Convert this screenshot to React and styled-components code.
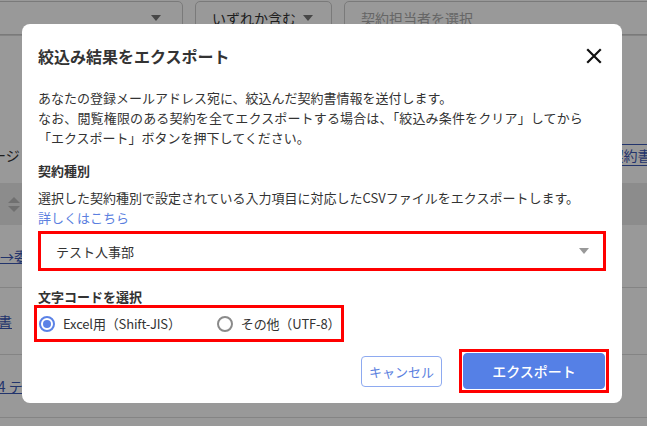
import styled, { createGlobalStyle } from 'styled-components';

const GlobalStyle = createGlobalStyle`
  html, body {
    margin: 0;
    padding: 0;
    width: 647px;
    height: 426px;
    overflow: hidden;
    background: #fff;
    font-family: "Noto Sans CJK JP", "Noto Sans", sans-serif;
    color: #333;
  }
`;

/* ---------- page behind the dialog ---------- */

const Page = styled.div`
  width: 647px;
  height: 426px;
  overflow: hidden;
  background: #fff;
`;

const FilterBar = styled.div`
  display: flex;
  gap: 12px;
  padding-top: 1px;
  margin-left: -20px;
  border-bottom: 1px solid #ddd;
`;

const FilterBox = styled.div`
  flex: 0 0 ${p => p.$w}px;
  height: 34px;
  box-sizing: border-box;
  border: 1px solid #ccc;
  border-radius: 5px;
  display: flex;
  align-items: center;
  justify-content: space-between;
  padding: 0 ${p => p.$pr || 18}px 0 16px;
  font-size: 14px;
  color: ${p => (p.$placeholder ? '#aaa' : '#333')};
`;

const Caret = styled.span`
  width: 0;
  height: 0;
  border-left: 5px solid transparent;
  border-right: 5px solid transparent;
  border-top: 6px solid ${p => p.$color || '#777'};
`;

const ToolRow = styled.div`
  display: flex;
  justify-content: space-between;
  align-items: center;
  height: 40px;
  margin-top: 99px;
  margin-left: -50px;
  margin-right: -21px;
  font-size: 14px;
`;

const OutlineBtn = styled.div`
  border: 1px solid #3a57b5;
  border-radius: 3px;
  padding: 0 10px;
  height: 20px;
  line-height: 20px;
  color: #3a57b5;
  font-size: 14px;
`;

const TableHead = styled.div`
  height: 42px;
  margin-top: 8px;
  background: #eaeaea;
  display: flex;
  align-items: center;
  padding-left: 8px;
`;

const SortIcon = styled.div`
  display: flex;
  flex-direction: column;
  gap: 3px;
  &:before, &:after {
    content: '';
    width: 0;
    height: 0;
    border-left: 6px solid transparent;
    border-right: 6px solid transparent;
  }
  &:before { border-bottom: 6px solid #bbb; }
  &:after { border-top: 6px solid #bbb; }
`;

const TableRow = styled.div`
  height: ${p => p.$h}px;
  box-sizing: border-box;
  border-bottom: 1px solid #ddd;
  display: flex;
  align-items: center;
  margin-left: ${p => p.$shift}px;
`;

const RowLink = styled.a`
  font-size: 14px;
  color: #3a57b5;
  text-decoration: underline;
  white-space: nowrap;
`;

/* ---------- dialog ---------- */

const Overlay = styled.div`
  position: fixed;
  inset: 0;
  background: rgba(0, 0, 0, 0.4);
  display: flex;
  align-items: flex-start;
  padding: 24px 0 0 22px;
`;

const Dialog = styled.div`
  width: 600px;
  box-sizing: border-box;
  background: #fff;
  border-radius: 8px;
  padding: 0 16px 10px;
`;

const Header = styled.div`
  height: 64px;
  display: flex;
  align-items: center;
  justify-content: space-between;
`;

const Title = styled.h2`
  margin: 0;
  font-size: 16px;
  font-weight: 700;
  color: #333;
`;

const CloseButton = styled.button`
  border: 0;
  background: none;
  padding: 0;
  margin-right: 4px;
  width: 16px;
  height: 16px;
  display: flex;
  cursor: pointer;
`;

const Text = styled.p`
  margin: 0;
  font-size: 13px;
  line-height: 20px;
  color: #333;
  letter-spacing: ${p => p.$ls || 0}px;
`;

const SectionLabel = styled.h3`
  margin: ${p => p.$top}px 0 0;
  font-size: 13px;
  line-height: 20px;
  font-weight: 700;
  color: #333;
`;

const Section = styled.div`
  margin-top: ${p => p.$top || 0}px;
  margin-left: ${p => p.$left || 0}px;
`;

const Link = styled.a`
  display: block;
  font-size: 13px;
  line-height: 20px;
  color: #5b7fe0;
  text-decoration: none;
`;

const Highlight = styled.div`
  border: 3px solid #ff0000;
  box-sizing: border-box;
  display: ${p => (p.$inline ? 'inline-flex' : 'block')};
`;

const SelectBox = styled.div`
  height: 34px;
  display: flex;
  align-items: center;
  justify-content: space-between;
  padding: 0 14px 0 15px;
  font-size: 13px;
  color: #333;
  background: #fff;
`;

const RadioGroup = styled.div`
  display: flex;
  align-items: center;
  gap: 36px;
  height: 31px;
  padding: 0 1px 0 2px;
`;

const RadioItem = styled.label`
  display: flex;
  align-items: center;
  gap: 8px;
  font-size: 13px;
  color: #333;
  letter-spacing: -0.15px;
`;

const RadioCircle = styled.span`
  width: 16px;
  height: 16px;
  box-sizing: border-box;
  border-radius: 50%;
  border: 2px solid ${p => (p.$checked ? '#5b82e6' : '#8a8a8a')};
  display: flex;
  align-items: center;
  justify-content: center;
  &:after {
    content: '';
    width: 8px;
    height: 8px;
    border-radius: 50%;
    background: ${p => (p.$checked ? '#5b82e6' : 'transparent')};
  }
`;

const Footer = styled.div`
  display: flex;
  justify-content: flex-end;
  align-items: center;
  gap: 17px;
  margin-top: 7px;
  margin-right: -3px;
`;

const Button = styled.button`
  font-family: inherit;
  font-size: ${p => (p.$primary ? 14 : 13)}px;
  font-weight: ${p => (p.$primary ? 500 : 400)};
  height: ${p => (p.$primary ? 36 : 31)}px;
  width: ${p => (p.$primary ? 142 : 81)}px;
  border-radius: 4px;
  border: 1px solid ${p => (p.$primary ? '#5580e6' : '#8eaaf0')};
  background: ${p => (p.$primary ? '#5580e6' : '#fff')};
  color: ${p => (p.$primary ? '#fff' : '#5b7fe0')};
  cursor: pointer;
  padding: 0;
  display: block;
`;

const ButtonFrame = styled(Highlight)`
  padding: 1px;
`;

export default function App() {
  return (
    <>
      <GlobalStyle />
      <Page>
        <FilterBar>
          <FilterBox $w={203} $pr={21}><span /><Caret /></FilterBox>
          <FilterBox $w={137}>いずれか含む<Caret /></FilterBox>
          <FilterBox $w={320} $placeholder>契約担当者を選択</FilterBox>
        </FilterBar>
        <ToolRow>
          <span>メッセージ</span>
          <OutlineBtn>契約書/</OutlineBtn>
        </ToolRow>
        <TableHead>
          <SortIcon />
        </TableHead>
        <TableRow $h={63} $shift={-14}><RowLink>書→委</RowLink></TableRow>
        <TableRow $h={67} $shift={-2}><RowLink>書</RowLink></TableRow>
        <TableRow $h={63} $shift={-10}><RowLink>14 テ</RowLink></TableRow>
      </Page>

      <Overlay>
        <Dialog>
          <Header>
            <Title>絞込み結果をエクスポート</Title>
            <CloseButton aria-label="閉じる">
              <svg width="16" height="16" viewBox="0 0 16 16">
                <path d="M2 2 L14 14 M14 2 L2 14" stroke="#111" strokeWidth="2.2" strokeLinecap="square" />
              </svg>
            </CloseButton>
          </Header>

          <Text>あなたの登録メールアドレス宛に、絞込んだ契約書情報を送付します。</Text>
          <Text $ls={0.15}>なお、閲覧権限のある契約を全てエクスポートする場合は、「絞込み条件をクリア」してから</Text>
          <Text>「エクスポート」ボタンを押下してください。</Text>

          <SectionLabel $top={13}>契約種別</SectionLabel>
          <Section $top={7}>
            <Text>選択した契約種別で設定されている入力項目に対応したCSVファイルをエクスポートします。</Text>
            <Link>詳しくはこちら</Link>
          </Section>
          <Section $top={3}>
            <Highlight>
              <SelectBox>
                テスト人事部
                <Caret $color="#999" />
              </SelectBox>
            </Highlight>
          </Section>

          <SectionLabel $top={16}>文字コードを選択</SectionLabel>
          <Section $top={-2} $left={-4}>
            <Highlight $inline>
              <RadioGroup>
                <RadioItem><RadioCircle $checked />Excel用（Shift-JIS）</RadioItem>
                <RadioItem><RadioCircle />その他（UTF-8）</RadioItem>
              </RadioGroup>
            </Highlight>
          </Section>

          <Footer>
            <Button>キャンセル</Button>
            <ButtonFrame $inline>
              <Button $primary>エクスポート</Button>
            </ButtonFrame>
          </Footer>
        </Dialog>
      </Overlay>
    </>
  );
}
